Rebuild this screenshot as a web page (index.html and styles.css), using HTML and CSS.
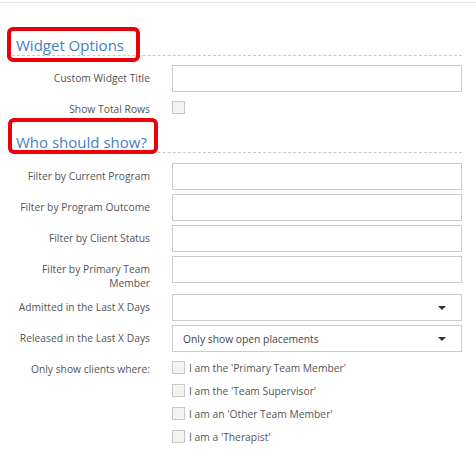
FILE: index.html
```html
<!DOCTYPE html>
<html>
<head>
    <meta charset="UTF-8">
    <title>Widget Options</title>
    <link rel="stylesheet" href="styles.css">
</head>
<body>
    <div class="panel">
        <h4 class="section-title"><span class="mark mark-first">Widget Options</span></h4>
        <div class="form-row">
            <label class="form-label">Custom Widget Title</label>
            <div class="text-box"></div>
        </div>
        <div class="form-row">
            <label class="form-label">Show Total Rows</label>
            <div class="check-list">
                <div class="check-item"><span class="check-box"></span></div>
            </div>
        </div>

        <h4 class="section-title second"><span class="mark mark-second">Who should show?</span></h4>
        <div class="form-row">
            <label class="form-label">Filter by Current Program</label>
            <div class="text-box"></div>
        </div>
        <div class="form-row">
            <label class="form-label">Filter by Program Outcome</label>
            <div class="text-box"></div>
        </div>
        <div class="form-row">
            <label class="form-label">Filter by Client Status</label>
            <div class="text-box"></div>
        </div>
        <div class="form-row">
            <label class="form-label">Filter by Primary Team Member</label>
            <div class="text-box"></div>
        </div>
        <div class="form-row">
            <label class="form-label">Admitted in the Last X Days</label>
            <div class="text-box select-box"><span class="select-value"></span><span class="caret"></span></div>
        </div>
        <div class="form-row">
            <label class="form-label">Released in the Last X Days</label>
            <div class="text-box select-box"><span class="select-value">Only show open placements</span><span class="caret"></span></div>
        </div>
        <div class="form-row">
            <label class="form-label">Only show clients where:</label>
            <div class="check-list">
                <div class="check-item"><span class="check-box"></span>I am the 'Primary Team Member'</div>
                <div class="check-item"><span class="check-box"></span>I am the 'Team Supervisor'</div>
                <div class="check-item"><span class="check-box"></span>I am an 'Other Team Member'</div>
                <div class="check-item"><span class="check-box"></span>I am a 'Therapist'</div>
            </div>
        </div>
    </div>
</body>
</html>
```

FILE: styles.css
```css
body {
    margin: 0;
    padding-top: 2px;
    background-color: #fff;
    font-family: 'Open Sans', 'Liberation Sans', sans-serif;
    color: #555;
}

.panel {
    border-top: 1px solid #e6e6e6;
    padding: 0 14px 20px 12px;
}

.section-title {
    margin: 32px 0 9px 0;
    padding-left: 4px;
    font-size: 15px;
    font-weight: normal;
    line-height: 20px;
    color: #3f80c2;
    border-bottom: 1px dashed #c8c8c8;
}

.section-title.second {
    margin-top: 13px;
    margin-bottom: 10px;
}

/* red annotation boxes drawn over the headings */
.mark {
    position: relative;
}

.mark::after {
    content: "";
    position: absolute;
    border: 4px solid #e8000b;
    border-radius: 6px;
}

.mark-first::after {
    left: -9px;
    right: -16px;
    top: -8px;
    bottom: -7px;
}

.mark-second::after {
    left: -8px;
    right: -11px;
    top: -14px;
    bottom: -2px;
}

.form-row {
    display: grid;
    grid-template-columns: 138px 1fr;
    column-gap: 22px;
    margin-bottom: 4px;
}

.form-label {
    text-align: right;
    font-size: 10.3px;
    line-height: 14px;
    padding-top: 6px;
    color: #555;
}

.text-box {
    height: 25px;
    border: 1px solid #ccc;
    background-color: #fff;
}

.select-box {
    display: flex;
    align-items: center;
    justify-content: space-between;
    padding: 0 15px 0 10px;
}

.select-value {
    font-size: 10.3px;
    color: #444;
}

.caret {
    width: 0;
    height: 0;
    border-left: 4px solid transparent;
    border-right: 4px solid transparent;
    border-top: 4px solid #333;
}

.check-list {
    display: flex;
    flex-direction: column;
}

.check-item {
    display: flex;
    align-items: center;
    height: 23px;
    font-size: 10.3px;
    color: #555;
}

.check-box {
    width: 11px;
    height: 11px;
    border: 1px solid #c8c8c8;
    background-color: #f3f3f3;
    margin-right: 4px;
}
```
